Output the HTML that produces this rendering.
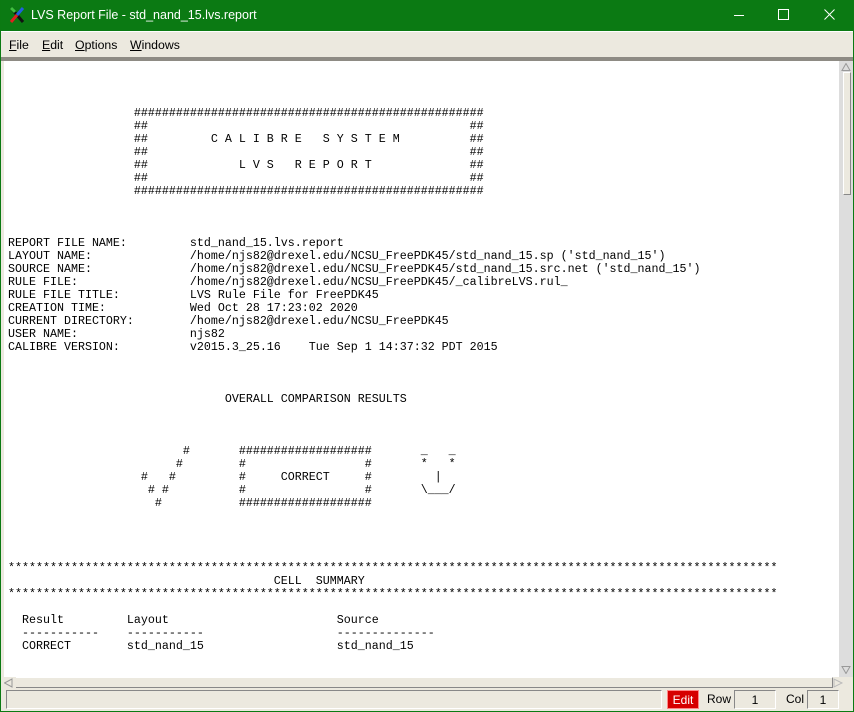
<!DOCTYPE html>
<html><head><meta charset="utf-8"><style>
*{margin:0;padding:0;box-sizing:border-box}
body{width:854px;height:712px;overflow:hidden;background:#ece9df;position:relative;font-family:"Liberation Sans",sans-serif}
#win{position:absolute;left:0;top:0;width:854px;height:712px;border:1px solid #0b7a12;border-top:none}
#title{position:absolute;left:0;top:0;width:854px;height:31px;background:#0b7a13;color:#fff;font-size:12.5px}
#title .t{position:absolute;left:31px;top:8px}
#menu{position:absolute;left:1px;top:31px;width:852px;height:27px;background:#ece9df;font-size:12.3px;color:#000;border-top:1px solid #fff}
#menu span{position:absolute;top:6px}
#menu u{text-decoration:underline}
#sep{position:absolute;left:1px;top:57px;width:852px;height:4px;background:#8e8b84}
#text{position:absolute;left:4px;top:61px;width:835px;height:616px;background:#fff;overflow:hidden}
pre{position:absolute;left:4px;top:20px;font-family:"Liberation Mono",monospace;font-size:11.67px;line-height:13px;color:#000}
#vs{position:absolute;left:839px;top:61px;width:14px;height:616px;background:#ddd}
#thumb{position:absolute;left:843px;top:72px;width:8px;height:123px;background:#ece9df;border:1px solid #fff;border-right-color:#888;border-bottom-color:#888}
#hs{position:absolute;left:16px;top:677px;width:817px;height:11px;background:#ece9df;border-bottom:1px solid #888;border-right:1px solid #888;border-top:1px solid #fff}
#status{position:absolute;left:6px;top:690px;width:656px;height:19px;border:1px solid #888;border-right-color:#fff;border-bottom-color:#fff}
.sb{position:absolute;top:690px;height:19px;font-size:12px;line-height:19px;text-align:center}
</style></head><body>
<div id="title">
<svg style="position:absolute;left:9px;top:7px" width="16" height="16" viewBox="0 0 16 16"><path d="M2 1 L14 15" stroke="#111" stroke-width="3"/><path d="M14 1 L8 8" stroke="#2060e0" stroke-width="3"/><path d="M8 8 L2 15" stroke="#e02020" stroke-width="3"/><path d="M2 1 L6 5" stroke="#40c040" stroke-width="3"/></svg>
<span class="t">LVS Report File - std_nand_15.lvs.report</span>
<svg style="position:absolute;left:734px;top:10px" width="11" height="11"><path d="M0 5.5H10" stroke="#fff"/></svg>
<svg style="position:absolute;left:778px;top:9px" width="12" height="12"><rect x="0.5" y="0.5" width="10" height="10" fill="none" stroke="#fff"/></svg>
<svg style="position:absolute;left:824px;top:9px" width="12" height="12"><path d="M0.5 0.5L10.5 10.5M10.5 0.5L0.5 10.5" stroke="#fff"/></svg>
</div>
<div id="menu"><span style="left:8px"><u>F</u>ile</span><span style="left:41px"><u>E</u>dit</span><span style="left:74px"><u>O</u>ptions</span><span style="left:129px"><u>W</u>indows</span></div>
<div id="sep"></div>
<div id="text"><pre>


                  ##################################################
                  ##                                              ##
                  ##         C A L I B R E   S Y S T E M          ##
                  ##                                              ##
                  ##             L V S   R E P O R T              ##
                  ##                                              ##
                  ##################################################



REPORT FILE NAME:         std_nand_15.lvs.report
LAYOUT NAME:              /home/njs82@drexel.edu/NCSU_FreePDK45/std_nand_15.sp ('std_nand_15')
SOURCE NAME:              /home/njs82@drexel.edu/NCSU_FreePDK45/std_nand_15.src.net ('std_nand_15')
RULE FILE:                /home/njs82@drexel.edu/NCSU_FreePDK45/_calibreLVS.rul_
RULE FILE TITLE:          LVS Rule File for FreePDK45
CREATION TIME:            Wed Oct 28 17:23:02 2020
CURRENT DIRECTORY:        /home/njs82@drexel.edu/NCSU_FreePDK45
USER NAME:                njs82
CALIBRE VERSION:          v2015.3_25.16    Tue Sep 1 14:37:32 PDT 2015



                               OVERALL COMPARISON RESULTS



                         #       ###################       _   _
                        #        #                 #       *   *
                   #   #         #     CORRECT     #         |
                    # #          #                 #       \___/
                     #           ###################




**************************************************************************************************************
                                      CELL  SUMMARY
**************************************************************************************************************

  Result         Layout                        Source
  -----------    -----------                   --------------
  CORRECT        std_nand_15                   std_nand_15
</pre></div>
<div id="vs"></div><div id="thumb"></div>
<svg style="position:absolute;left:841px;top:63px" width="10" height="8"><path d="M5 0.5L9 7.5H1Z" fill="none" stroke="#999"/></svg>
<svg style="position:absolute;left:841px;top:666px" width="10" height="8"><path d="M5 7.5L9 0.5H1Z" fill="none" stroke="#999"/></svg>
<svg style="position:absolute;left:4px;top:678px" width="10" height="10"><path d="M0.5 5L8 1V9Z" fill="none" stroke="#999"/></svg>
<svg style="position:absolute;left:833px;top:678px" width="10" height="10"><path d="M9 5L1 1V9Z" fill="none" stroke="#bbb"/></svg>
<div id="hs"></div>
<div id="status"></div>
<div class="sb" style="left:667px;width:32px;background:#d60000;color:#fff;border:1px solid #f88">Edit</div>
<div class="sb" style="left:704px;width:30px">Row</div>
<div class="sb" style="left:734px;width:42px;border:1px solid #888;border-right-color:#fff;border-bottom-color:#fff">1</div>
<div class="sb" style="left:783px;width:24px">Col</div>
<div class="sb" style="left:807px;width:32px;border:1px solid #888;border-right-color:#fff;border-bottom-color:#fff">1</div>
<div id="win"></div>
</body></html>
